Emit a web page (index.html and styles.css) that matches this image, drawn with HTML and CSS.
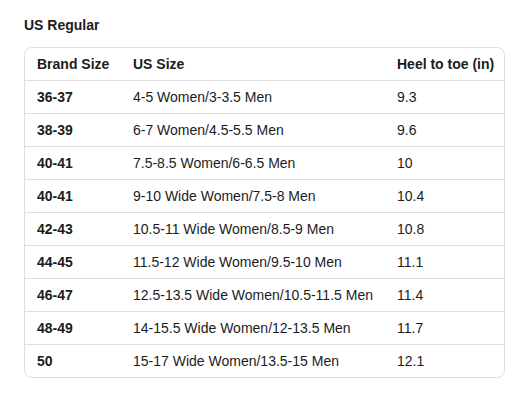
FILE: index.html
```html
<!DOCTYPE html>
<html lang="en">
<head>
  <meta charset="UTF-8" />
  <meta name="viewport" content="width=device-width, initial-scale=1.0">
  <title>US Regular Size Chart</title>
  <link rel="stylesheet" href="styles.css">
</head>
<body>
  <div class="chart">
    <h2>US Regular</h2>
    <div class="table-wrap">
      <table>
        <thead>
          <tr>
            <th class="col-brand">Brand Size</th>
            <th class="col-us">US Size</th>
            <th class="col-heel">Heel to toe (in)</th>
          </tr>
        </thead>
        <tbody>
          <tr><td class="brand">36-37</td><td>4-5 Women/3-3.5 Men</td><td>9.3</td></tr>
          <tr><td class="brand">38-39</td><td>6-7 Women/4.5-5.5 Men</td><td>9.6</td></tr>
          <tr><td class="brand">40-41</td><td>7.5-8.5 Women/6-6.5 Men</td><td>10</td></tr>
          <tr><td class="brand">40-41</td><td>9-10 Wide Women/7.5-8 Men</td><td>10.4</td></tr>
          <tr><td class="brand">42-43</td><td>10.5-11 Wide Women/8.5-9 Men</td><td>10.8</td></tr>
          <tr><td class="brand">44-45</td><td>11.5-12 Wide Women/9.5-10 Men</td><td>11.1</td></tr>
          <tr><td class="brand">46-47</td><td>12.5-13.5 Wide Women/10.5-11.5 Men</td><td>11.4</td></tr>
          <tr><td class="brand">48-49</td><td>14-15.5 Wide Women/12-13.5 Men</td><td>11.7</td></tr>
          <tr><td class="brand">50</td><td>15-17 Wide Women/13.5-15 Men</td><td>12.1</td></tr>
        </tbody>
      </table>
    </div>
  </div>
</body>
</html>
```

FILE: styles.css
```css
body {
  margin: 0;
  font-family: "Liberation Sans", Arial, sans-serif;
  background: #fff;
  color: #1c1c1c;
}

.chart {
  padding: 17px 24px;
  width: 481px;
}

h2 {
  margin: 0 0 14px;
  font-size: 14px;
  line-height: 16px;
  font-weight: bold;
}

.table-wrap {
  border: 1px solid #dedede;
  border-radius: 8px;
  overflow: hidden;
}

table {
  width: 100%;
  border-collapse: collapse;
  table-layout: fixed;
  font-size: 14px;
}

th,
td {
  height: 32px;
  padding: 0 0 0 12px;
  text-align: left;
  vertical-align: middle;
  white-space: nowrap;
}

th {
  font-weight: bold;
}

td {
  border-top: 1px solid #dedede;
}

.col-brand {
  width: 84px;
}

.col-us {
  width: 252px;
}

.brand {
  font-weight: bold;
}
```
